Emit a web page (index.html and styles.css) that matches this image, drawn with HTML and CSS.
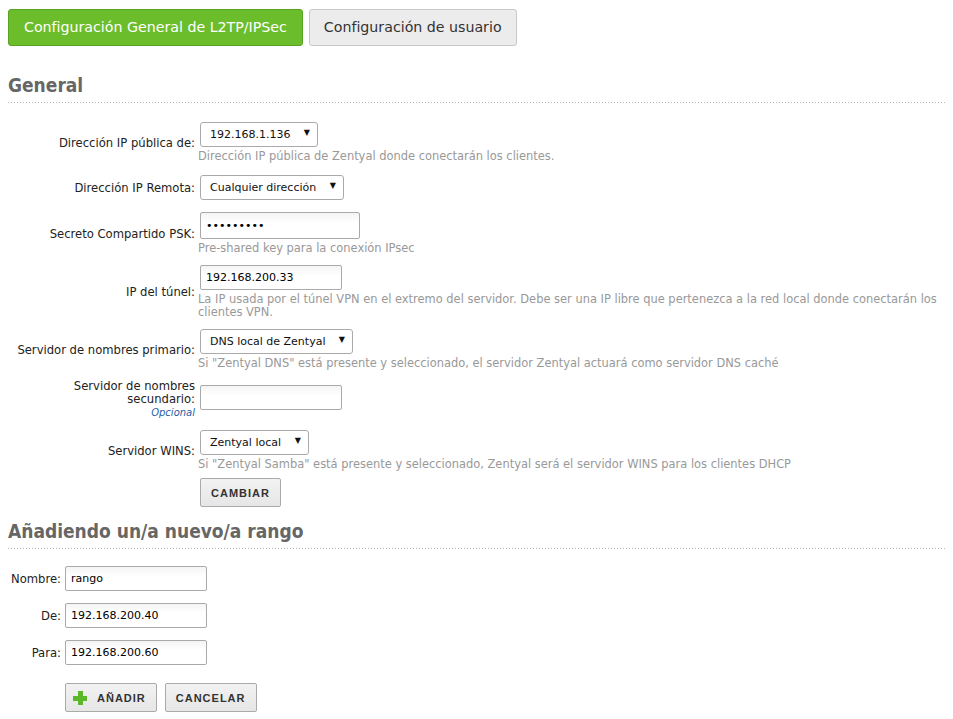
FILE: index.html
```html
<!DOCTYPE html>
<html lang="es">
<head>
  <meta charset="UTF-8">
  <title>L2TP/IPSec</title>
  <link rel="stylesheet" href="styles.css">
</head>
<body>
  <div class="tabs">
    <a class="tab active">Configuración General de L2TP/IPSec</a>
    <a class="tab">Configuración de usuario</a>
  </div>

  <h3>General</h3>

  <div class="form">
    <label>Dirección IP pública de:</label>
    <div class="field">
      <span class="sel"><select><option>192.168.1.136</option></select></span>
      <div class="help">Dirección IP pública de Zentyal donde conectarán los clientes.</div>
    </div>

    <label class="sp2">Dirección IP Remota:</label>
    <div class="field sp2">
      <span class="sel"><select><option>Cualquier dirección</option></select></span>
    </div>

    <label class="sp2">Secreto Compartido PSK:</label>
    <div class="field sp2">
      <input type="password" class="wide" value="123456789">
      <div class="help">Pre-shared key para la conexión IPsec</div>
    </div>

    <label>IP del túnel:</label>
    <div class="field">
      <input type="text" value="192.168.200.33">
      <div class="help">La IP usada por el túnel VPN en el extremo del servidor. Debe ser una IP libre que pertenezca a la red local donde conectarán los clientes VPN.</div>
    </div>

    <label>Servidor de nombres primario:</label>
    <div class="field">
      <span class="sel"><select><option>DNS local de Zentyal</option></select></span>
      <div class="help">Si "Zentyal DNS" está presente y seleccionado, el servidor Zentyal actuará como servidor DNS caché</div>
    </div>

    <label class="multi">Servidor de nombres secundario:<span class="optional">Opcional</span></label>
    <div class="field top">
      <input type="text" value="">
    </div>

    <label class="sp1">Servidor WINS:</label>
    <div class="field sp1">
      <span class="sel"><select><option>Zentyal local</option></select></span>
      <div class="help">Si "Zentyal Samba" está presente y seleccionado, Zentyal será el servidor WINS para los clientes DHCP</div>
    </div>

    <span></span>
    <div class="field submit">
      <button class="btn">Cambiar</button>
    </div>
  </div>

  <h3 class="second">Añadiendo un/a nuevo/a rango</h3>

  <div class="form small">
    <label>Nombre:</label>
    <div class="field"><input type="text" value="rango"></div>

    <label>De:</label>
    <div class="field"><input type="text" value="192.168.200.40"></div>

    <label>Para:</label>
    <div class="field"><input type="text" value="192.168.200.60"></div>

    <span></span>
    <div class="field buttons">
      <button class="btn add"><span class="plus"></span>Añadir</button>
      <button class="btn">Cancelar</button>
    </div>
  </div>
</body>
</html>
```

FILE: styles.css
```css
body {
  margin: 8px;
  font-family: 'DejaVu Sans', Verdana, sans-serif;
  font-size: 11.6px;
  color: #222;
  background: #fff;
}
.tabs {
  display: flex;
  gap: 6px;
  margin-top: 1px;
}
.tab {
  display: block;
  height: 35px;
  line-height: 35px;
  padding: 0 15px;
  font-size: 14.2px;
  border: 1px solid #c8c8c8;
  border-radius: 3px;
  background: #ececec;
  color: #333;
}
.tab + .tab {
  padding: 0 14px;
}
.tab.active {
  background: #6bbd2b;
  border-color: #58a322;
  color: #fff;
}
h3 {
  margin: 28px -6px 0 0;
  padding-bottom: 7px;
  font-family: 'DejaVu Sans Condensed', 'DejaVu Sans', sans-serif;
  font-size: 19px;
  font-weight: bold;
  color: #666;
  background: linear-gradient(to right, #b8b8b8 1px, transparent 1px) left bottom / 3px 1px repeat-x;
}
h3.second {
  margin-top: 13px;
}
.form {
  display: grid;
  grid-template-columns: 187px 1fr;
  column-gap: 3px;
  row-gap: 10px;
  align-items: center;
  padding-top: 19px;
}
.form label {
  text-align: right;
}
.form label.multi {
  line-height: 13px;
}
.form .sp1 {
  margin-top: 1px;
}
.form .sp2 {
  margin-top: 2px;
}
.form .top {
  align-self: start;
  margin-top: 5px;
}
.optional {
  display: block;
  font-style: italic;
  font-size: 10px;
  color: #1f5fa8;
}
.field {
  padding-left: 2px;
}
.help {
  margin: 3px 0 0 -2px;
  font-size: 11.45px;
  color: #999;
  line-height: 13px;
}
input {
  box-sizing: border-box;
  width: 142px;
  height: 25px;
  padding: 3px 5px;
  font-family: inherit;
  font-size: 11px;
  border: 1px solid #aaa;
  border-radius: 2px;
  background: linear-gradient(#f4f4f4, #fff 40%);
}
input.wide {
  width: 160px;
  height: 27px;
}
.sel {
  position: relative;
  display: inline-block;
}
.sel select {
  appearance: none;
  height: 25px;
  padding: 2px 26px 2px 9px;
  font-family: inherit;
  font-size: 11px;
  color: #111;
  border: 1px solid #aaa;
  border-radius: 3px;
  background: #fff;
}
.sel::after {
  content: "▼";
  position: absolute;
  right: 8px;
  top: 6px;
  font-size: 8px;
  color: #111;
  pointer-events: none;
}
.form .submit {
  align-self: start;
  margin-top: -3px;
}
.btn {
  height: 29px;
  padding: 0 10px;
  font-family: 'Liberation Sans', Arial, sans-serif;
  font-size: 11px;
  font-weight: bold;
  letter-spacing: 1px;
  text-transform: uppercase;
  color: #333;
  border: 1px solid #aaa;
  border-radius: 2px;
  background: linear-gradient(#f2f2f2, #e6e6e6);
  display: inline-flex;
  align-items: center;
}
.btn.add {
  padding-left: 7px;
}
.buttons {
  display: flex;
  gap: 8px;
}
.plus {
  position: relative;
  width: 14px;
  height: 14px;
  margin-right: 10px;
}
.plus::before,
.plus::after {
  content: "";
  position: absolute;
  background: #5cb82a;
}
.plus::before {
  left: 5px;
  top: 0;
  width: 5px;
  height: 14px;
}
.plus::after {
  left: 0;
  top: 5px;
  width: 14px;
  height: 5px;
}
.form.small {
  grid-template-columns: 53px 1fr;
  column-gap: 4px;
  row-gap: 12px;
  padding-top: 17px;
}
.form.small .field {
  padding-left: 0;
}
.form.small .buttons {
  margin-top: 6px;
}
```
